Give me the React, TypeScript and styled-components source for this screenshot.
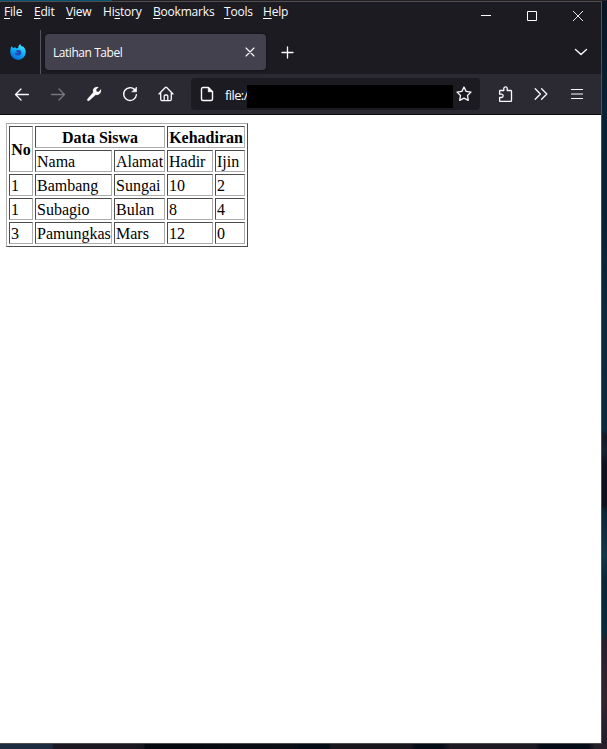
import React from 'react';
import styled, { createGlobalStyle } from 'styled-components';

const GlobalStyle = createGlobalStyle`
  * { box-sizing: border-box; }
  html, body { margin: 0; padding: 0; overflow: hidden; }
`;

const Desktop = styled.div`
  width: 607px;
  height: 749px;
  padding-top: 1px;
  overflow: hidden;
  background:
    linear-gradient(90deg, #00526e 112px, #241f21 112px) 0 0 / 607px 1px no-repeat,
    linear-gradient(90deg, #1d2b40 0 52px, #1c1822 54px 130px, #15171f 144px, #06090f 145px 190px, #0d0f16 290px, #060c16 300px 328px, #1a161e 332px 410px, #060c16 416px 442px, #1e1a23 450px 535px, #050c17 541px 588px, #271f2a 595px) 0 744px / 607px 5px no-repeat,
    linear-gradient(180deg, #061522 0, #092136 110px, #082033 210px, #0c2a40 320px, #0b2b41 430px, #101824 436px, #142331 450px, #0d121e 465px, #0c111c 505px, #0b2737 512px, #12364a 555px, #082838 580px, #092b3b 632px, #271f2a 642px, #302630 700px, #211b28 749px);
  font-family: 'Open Sans', 'Noto Sans', sans-serif;
`;

const BrowserWindow = styled.div`
  display: flex;
  flex-direction: column;
  width: 602px;
  height: 743px;
  border: 1px solid #504e50;
  border-left: 0;
  background: #fff;
`;

const TitleBar = styled.header`
  display: flex;
  justify-content: space-between;
  height: 28px;
  flex: none;
  background: #1c1b22;
  color: #fbfbfe;
`;

const MenuBar = styled.nav`
  display: grid;
  grid-template-columns: 30px 32px 37px 50px 71px 39px 40px;
  padding-left: 4px;
  height: 20px;
  font-size: 12px;
  line-height: 20px;
`;

const MenuItem = styled.span`
  white-space: nowrap;
  letter-spacing: -0.2px;
  u { text-underline-offset: 2px; text-decoration-thickness: 1px; text-decoration-skip-ink: none; }
`;

const WindowControls = styled.div`
  display: flex;
  width: 138px;
  height: 28px;
`;

const ControlButton = styled.span`
  display: flex;
  justify-content: center;
  width: 46px;
  padding-top: 9px;
  svg { display: block; }
`;

const TabStrip = styled.div`
  display: flex;
  height: 44px;
  flex: none;
  background: #1c1b22;
  color: #fbfbfe;
`;

const PinnedTab = styled.div`
  display: flex;
  width: 41px;
  padding: 14px 0 0 10px;
  border-right: 1px solid #55545c;
`;

const Tab = styled.div`
  display: flex;
  align-items: center;
  justify-content: space-between;
  width: 221px;
  height: 36px;
  margin: 4px 0 0 4px;
  padding: 0 11px 0 8px;
  border-radius: 4px;
  background: #42414d;
  box-shadow: 0 0 3px rgba(0, 0, 0, 0.45);
`;

const TabTitle = styled.span`
  padding-top: 2px;
  font-size: 12px;
  line-height: 16px;
  letter-spacing: -0.45px;
  white-space: nowrap;
`;

const NewTab = styled.span`
  display: flex;
  padding: 16px 0 0 15px;
`;

const AllTabs = styled.span`
  display: flex;
  margin-left: auto;
  padding: 16px 13px 0 0;
`;

const Toolbar = styled.div`
  display: flex;
  align-items: center;
  height: 41px;
  flex: none;
  padding: 0 6px 0 4px;
  border-bottom: 1px solid #0c0c0d;
  background: #2b2a33;
  color: #fbfbfe;
`;

const ToolButton = styled.span<{ $dim?: boolean }>`
  display: flex;
  align-items: center;
  justify-content: center;
  width: 36px;
  height: 36px;
  color: ${p => (p.$dim ? '#77767d' : '#fbfbfe')};
`;

const AddressBar = styled.div`
  display: flex;
  align-items: center;
  width: 289px;
  height: 32px;
  margin: 0 7px 0 7px;
  padding-left: 8px;
  border-radius: 4px;
  background: #1c1b22;
`;

const Address = styled.span`
  width: 22px;
  margin-left: 10px;
  padding-top: 2px;
  font-size: 13px;
  line-height: 20px;
  letter-spacing: -0.6px;
  white-space: nowrap;
`;

const Redaction = styled.span`
  position: relative;
  width: 206px;
  height: 23px;
  margin-top: 5px;
  margin-right: 3px;
  background: #000;
`;

const Page = styled.main`
  flex: 1;
  padding: 8px 6px;
  background: #fff;
`;

const AttendanceTable = styled.table`
  width: 242px;
  table-layout: fixed;
  border: 1px solid;
  border-color: #adadad #4c4c4c #4c4c4c #adadad;
  border-collapse: separate;
  border-spacing: 2px;
  color: #000;
  font: 16px/18px 'Liberation Serif', 'Times New Roman', serif;

  th, td {
    height: 22px;
    padding: 2px 1px 0;
    border: 1px solid;
    border-color: #4c4c4c #adadad #adadad #4c4c4c;
    white-space: nowrap;
  }
`;

const Col = styled.col<{ $w: number }>`
  width: ${p => p.$w}px;
`;

const Icon = ({ size = 16, width = 1.4, children }: { size?: number; width?: number; children: React.ReactNode }) => (
  <svg width={size} height={size} viewBox={`0 0 ${size} ${size}`} fill="none" stroke="currentColor"
    strokeWidth={width} strokeLinecap="round" strokeLinejoin="round">{children}</svg>
);

const FirefoxLogo = () => (
  <svg width="16" height="16" viewBox="0 0 16 16">
    <defs>
      <linearGradient id="flame" x1="0.8" y1="0" x2="0.3" y2="1">
        <stop offset="0" stopColor="#54edff" />
        <stop offset="0.45" stopColor="#12b3fa" />
        <stop offset="1" stopColor="#0767d8" />
      </linearGradient>
    </defs>
    <path d="M1.6 2.1 3.2 4 5.3 3.2 6.5 4.5 8.3 3.8C8.2 2.2 9 1 10.4.1c.1 1.4 1 2 2 2.8l.2-1c2 1.5 3.1 3.7 3.1 6.1a7.7 7.7 0 0 1-15.4.5C.1 6 .8 3.8 1.6 2.1Z" fill="url(#flame)" />
    <path d="M5.5 6.2c1.2.4 2 .2 3-.5 1.6.2 2.8 1.4 2.8 3 0 1.8-1.5 2.9-3.2 2.9-1.9 0-3.4-1.3-3.4-3 1 .6 2.1.6 3.1-.2-1.2-.2-2.1-.9-2.3-2.2Z" fill="#2548b4" />
  </svg>
);

const menus: [string, string, string][] = [
  ['', 'F', 'ile'],
  ['', 'E', 'dit'],
  ['', 'V', 'iew'],
  ['Hi', 's', 'tory'],
  ['', 'B', 'ookmarks'],
  ['', 'T', 'ools'],
  ['', 'H', 'elp'],
];

const students = [
  ['1', 'Bambang', 'Sungai', '10', '2'],
  ['1', 'Subagio', 'Bulan', '8', '4'],
  ['3', 'Pamungkas', 'Mars', '12', '0'],
];

export default function App() {
  return (
    <Desktop>
      <GlobalStyle />
      <BrowserWindow>
        <TitleBar>
          <MenuBar>
            {menus.map(([before, key, after]) => (
              <MenuItem key={key}>{before}<u>{key}</u>{after}</MenuItem>
            ))}
          </MenuBar>
          <WindowControls>
            <ControlButton><svg width="10" height="10"><path d="M0 4.5h10" stroke="#fff" /></svg></ControlButton>
            <ControlButton><svg width="10" height="10"><path d="M.5.5h9v9h-9z" fill="none" stroke="#fff" /></svg></ControlButton>
            <ControlButton><svg width="10" height="10"><path d="m0 0 10 10M10 0 0 10" stroke="#fff" strokeWidth="0.9" /></svg></ControlButton>
          </WindowControls>
        </TitleBar>

        <TabStrip>
          <PinnedTab><FirefoxLogo /></PinnedTab>
          <Tab>
            <TabTitle>Latihan Tabel</TabTitle>
            <Icon size={10} width={1.1}><path d="m1 1 8 8M9 1 1 9" /></Icon>
          </Tab>
          <NewTab><Icon size={13} width={1.3}><path d="M6.5 1v11M1 6.5h11" /></Icon></NewTab>
          <AllTabs><Icon size={14} width={1.4}><path d="m1.5 3.5 5.5 5 5.5-5" /></Icon></AllTabs>
        </TabStrip>

        <Toolbar>
          <ToolButton><Icon width={1.3}><path d="M14.4 8.500H1.8M7 3 1.5 8.500 7 14" /></Icon></ToolButton>
          <ToolButton $dim><Icon width={1.3}><path d="M1.6 8.500h12.6M9 3 14.5 8.500 9 14" /></Icon></ToolButton>
          <ToolButton>
            <Icon width={0.2}><path fill="currentColor" d="M14.9 3.500 12.400 5.900 10.500 5.500 10.100 3.600 12.500 1.200C10.500.7 8.600 1.100 7.600 2.700c-.7 1.100-.7 2.400-.3 3.500L1.500 12.900c-.5.600-.5 1.200 0 1.700s1.200.5 1.800 0L9.800 8.700c1.200.4 2.500.2 3.600-.7 1.400-1.100 1.900-2.800 1.500-4.500Z" /></Icon>
          </ToolButton>
          <ToolButton>
            <Icon><path d="M14.400 8.700A6.400 6.400 0 1 1 12.800 3.800" /><path d="M14.500 1.500v4.300h-4.300Z" fill="currentColor" strokeWidth="0.7" /></Icon>
          </ToolButton>
          <ToolButton>
            <Icon width={1.3}><path d="M1 8 7.300 1.500q.7-.7 1.400 0L15 8M2.700 6.700v6.600q0 1.300 1.300 1.300h8q1.300 0 1.300-1.300V6.700M6.200 14.500V10q0-1 1-1h1.600q1 0 1 1v4.500" /></Icon>
          </ToolButton>

          <AddressBar>
            <Icon width={1.4}>
              <path d="M4 1.500h5.300l4.200 4.200v7.300q0 1.500-1.500 1.500H4Q2.500 14.500 2.500 13V3Q2.500 1.500 4 1.500Z" />
              <path d="M9.300 1.500v4.200h4.200Z" fill="currentColor" strokeWidth="0.8" />
            </Icon>
            <Address>file:/</Address>
            <Redaction />
            <Icon width={1.3}><path d="m8 1 2.100 4.400 4.900.7-3.500 3.400.8 4.900L8 12.100l-4.300 2.300.8-4.900L1 6.100l4.900-.7Z" /></Icon>
          </AddressBar>

          <ToolButton>
            <Icon width={1.3}><path d="M2.600 5.300q0-.8.8-.8h3.400V2.600a1.700 1.700 0 0 1 3.400 0v1.900h3.500q.8 0 .8.8v9.300q0 .8-.8.8H3.400q-.8 0-.8-.8v-3.100h1.900a1.650 1.650 0 0 0 0-3.300H2.600Z" /></Icon>
          </ToolButton>
          <ToolButton><Icon width={1.3}><path d="m2.200 2.800 5.200 5.200-5.200 5.200M8.600 2.800 13.800 8l-5.200 5.200" /></Icon></ToolButton>
          <ToolButton><Icon width={1.2}><path d="M2.500 3.500h11M2.500 8h11M2.500 12.500h11" /></Icon></ToolButton>
        </Toolbar>

        <Page>
          <AttendanceTable>
            <colgroup>
              <Col $w={24} /><Col $w={77} /><Col $w={51} /><Col $w={46} /><Col $w={30} />
            </colgroup>
            <tbody>
              <tr><th rowSpan={2}>No</th><th colSpan={2}>Data Siswa</th><th colSpan={2}>Kehadiran</th></tr>
              <tr><td>Nama</td><td>Alamat</td><td>Hadir</td><td>Ijin</td></tr>
              {students.map((row, r) => (
                <tr key={r}>{row.map((value, c) => <td key={c}>{value}</td>)}</tr>
              ))}
            </tbody>
          </AttendanceTable>
        </Page>
      </BrowserWindow>
    </Desktop>
  );
}
